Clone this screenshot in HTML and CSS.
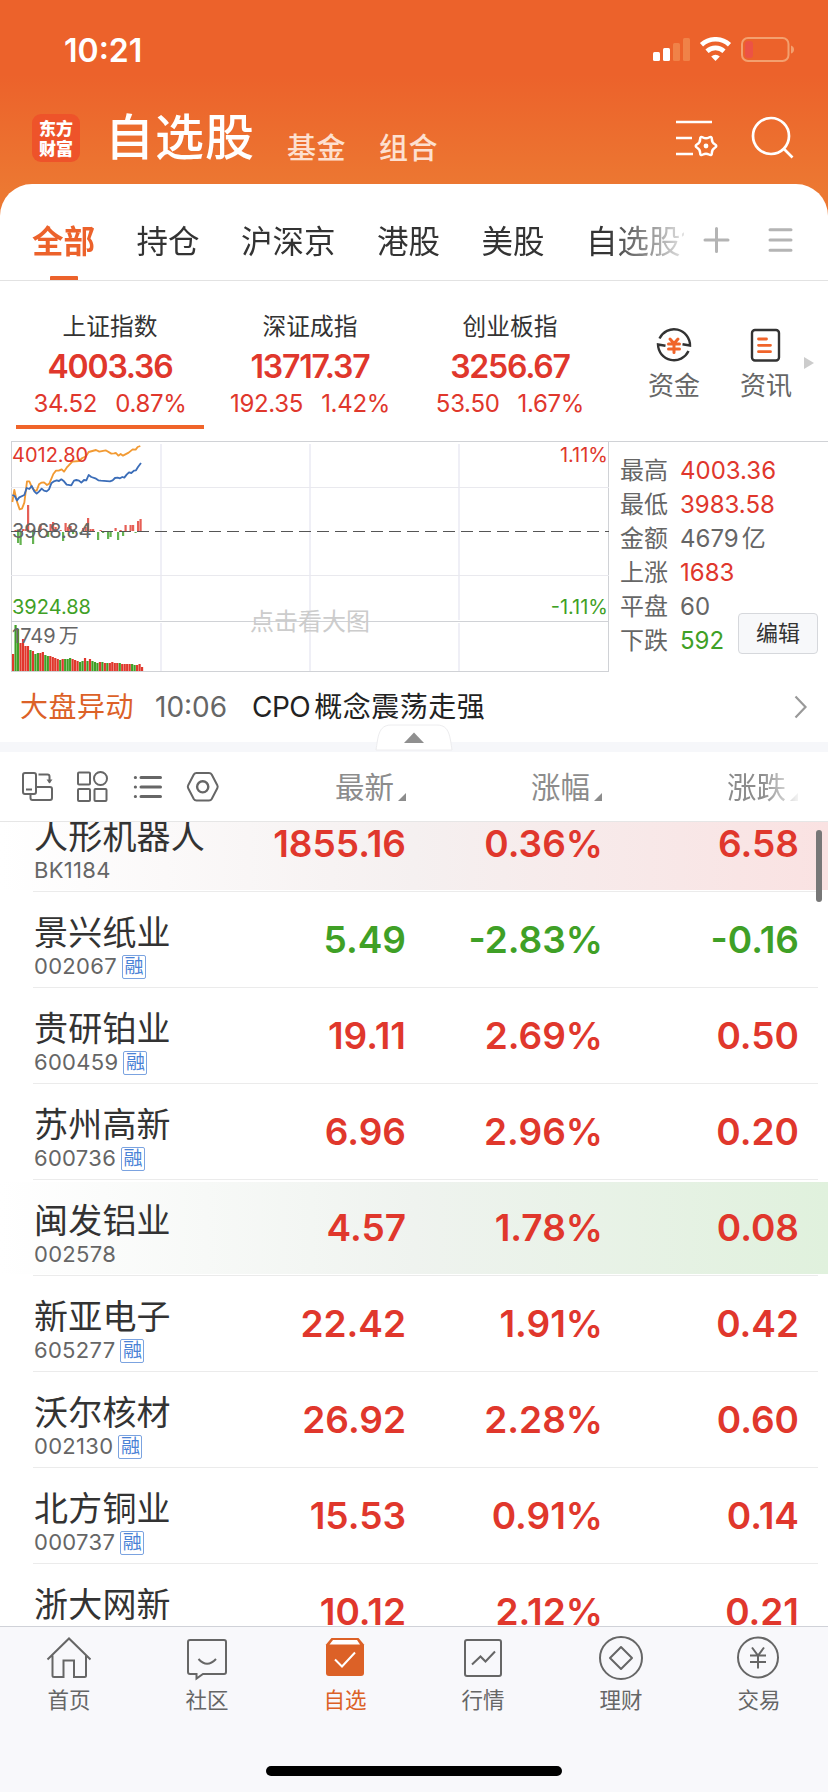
FILE: index.html
```html
<!DOCTYPE html>
<html lang="zh-CN">
<head>
    <meta charset="UTF-8">
    <meta name="viewport" content="width=device-width, initial-scale=1.0">
    <title>自选股</title>
    <link rel="stylesheet" href="styles.css">
</head>
<body>
    <header class="header">
        <div class="status">
            <span class="clock">10:21</span>
            <svg width="142" height="26" viewBox="0 0 142 26">
                <rect x="0" y="15" width="7" height="9" rx="1.5" fill="#fff"/>
                <rect x="10" y="11" width="7" height="13" rx="1.5" fill="#fff"/>
                <rect x="20" y="6" width="7" height="18" rx="1.5" fill="#f08248"/>
                <rect x="30" y="1" width="7" height="23" rx="1.5" fill="#f08248"/>
                <g fill="none" stroke="#fff" stroke-width="4.6">
                    <path d="M48.5 7.8a20.5 20.5 0 0 1 28 0"/>
                    <path d="M54 14.2a12.5 12.5 0 0 1 17 0"/>
                </g>
                <path d="M62.5 24l-4.3-4.5a6.5 6.5 0 0 1 8.6 0z" fill="#fff"/>
                <rect x="89" y="1" width="46.5" height="23" rx="6" fill="none" stroke="#f3a06f" stroke-width="2"/>
                <rect x="92" y="4" width="8" height="17" rx="3" fill="#ec5245"/>
                <path d="M138 8.5q3 1 3 4t-3 4z" fill="#f3a06f"/>
            </svg>
        </div>
        <div class="title-bar">
            <div class="logo"><span>东方</span><span>财富</span></div>
            <h1>自选股</h1>
            <span class="sub">基金</span>
            <span class="sub">组合</span>
            <svg class="head-icons" width="120" height="44" viewBox="0 0 120 44" fill="none" stroke="#fff" stroke-width="2.7">
                <path d="M0 6h36M0 22h16M0 38h17"/>
                <path transform="translate(30 30) scale(.92)" d="M9.6 1.85Q6.4 3.7 6.4 7.4Q6.4 11.1 3.2 9.25Q0 7.4-3.2 9.25Q-6.4 11.1-6.4 7.4Q-6.4 3.7-9.6 1.85Q-12.8 0-9.6-1.85Q-6.4-3.7-6.4-7.4Q-6.4-11.1-3.2-9.25Q0-7.4 3.2-9.25Q6.4-11.1 6.4-7.4Q6.4-3.7 9.6-1.85Q12.8 0 9.6 1.85z"/>
                <circle cx="30" cy="30" r="2.4" fill="#fff" stroke="none"/>
                <circle cx="95" cy="20" r="18"/>
                <path d="M107.5 32.5l9 9"/>
            </svg>
        </div>
    </header>

    <main class="panel">
        <nav class="tabs">
            <div class="tab-scroll">
                <span class="tab active">全部</span>
                <span class="tab">持仓</span>
                <span class="tab">沪深京</span>
                <span class="tab">港股</span>
                <span class="tab">美股</span>
                <span class="tab">自选股1</span>
            </div>
            <svg width="90" height="28" viewBox="0 0 90 28" stroke="#b4b4b4" stroke-width="3" stroke-linecap="round">
                <path d="M2 14h23M13.5 2.500v23M67 3.700h21M67 14h21M67 24.300h21"/>
            </svg>
        </nav>

        <section class="indices">
            <div class="index active">
                <span class="name">上证指数</span>
                <strong>4003.36</strong>
                <span class="change"><i>34.52</i><i>0.87%</i></span>
            </div>
            <div class="index">
                <span class="name">深证成指</span>
                <strong>13717.37</strong>
                <span class="change"><i>192.35</i><i>1.42%</i></span>
            </div>
            <div class="index">
                <span class="name">创业板指</span>
                <strong>3256.67</strong>
                <span class="change"><i>53.50</i><i>1.67%</i></span>
            </div>
            <div class="shortcut first">
                <svg width="38" height="38" viewBox="0 0 38 38" fill="none" stroke="#333" stroke-width="2.4">
                    <path d="M4.500 12.500a16 16 0 0 1 30.500 7l-7.500-1.300"/>
                    <path d="M33.500 25a16 16 0 0 1-30.500-6.500l7.500 1.300"/>
                    <path stroke="#f0642a" stroke-width="3" stroke-linecap="round" d="M15 13l4 4.500 4-4.500M13.500 18h11M13.500 23h11M19 18v8.500"/>
                </svg>
                <span>资金</span>
            </div>
            <div class="shortcut">
                <svg width="38" height="38" viewBox="0 0 38 38" fill="none" stroke="#333" stroke-width="2.4">
                    <rect x="5" y="4" width="27" height="30.5" rx="3"/>
                    <path stroke="#f0642a" stroke-width="2.8" stroke-linecap="round" d="M11.500 13h8M11.500 19.300h12M11.500 25.700h12"/>
                </svg>
                <span>资讯</span>
            </div>
            <svg class="more" width="10" height="12" viewBox="0 0 10 12"><path d="M0 0l10 6-10 6z" fill="#ccc"/></svg>
        </section>

        <section class="market">
            <div class="chart">
                <svg width="598" height="231" viewBox="0 0 598 231">
                    <g fill="none">
                        <path stroke="#efeff6" stroke-width="2" d="M150 3v176M299 3v176M448 3v176M150 182v48M299 182v48M448 182v48"/>
                        <path stroke="#e9e9ee" d="M0 46.500h598M0 134.500h598"/>
                        <path stroke="#d0d2d6" d="M0 180.500h598"/>
                    </g>
                    <g id="bars"></g>
                    <path stroke="#555" stroke-dasharray="12 6" d="M0 90.500h598"/>
                    <g transform="translate(-11 -11) scale(.3333)" fill="none" stroke-width="5.5" stroke-linejoin="round">
                        <polyline stroke="#f29a33" points="37,216 43,180 51,215 59,238 66,236 73,218 81,154 88,154 96,172 104,182 110,182 117,163 124,158 132,157 141,165 148,161 160,132 168,122 176,122 185,118 192,125 200,113 217,95 237,93 247,84 257,80 266,66 288,60 298,65 317,61 334,71 342,70 348,69 355,77 362,72 369,77 386,68 398,58 407,59 413,51 421,48"/>
                        <polyline stroke="#3b6db8" points="37,195 44,198 51,211 58,202 73,195 80,174 88,177 95,168 103,184 110,191 117,185 125,176 132,182 140,184 147,178 154,160 162,154 170,151 177,153 184,148 192,154 200,164 214,166 222,152 229,150 237,152 244,158 252,150 259,151 266,135 274,141 286,145 295,151 303,152 330,154 338,151 345,144 353,143 360,145 367,141 373,143 380,134 387,127 394,129 402,122 408,121 414,111 423,99"/>
                    </g>
                </svg>
                <span class="label red high">4012.80</span>
                <span class="label mid">3968.84</span>
                <span class="label green low">3924.88</span>
                <span class="label red high right">1.11%</span>
                <span class="label green low right">-1.11%</span>
                <span class="label volume">1749<b>万</b></span>
                <span class="hint">点击看大图</span>
            </div>
            <dl class="stats">
                <dt>最高</dt><dd class="red">4003.36</dd>
                <dt>最低</dt><dd class="red">3983.58</dd>
                <dt>金额</dt><dd>4679<b>亿</b></dd>
                <dt>上涨</dt><dd class="red">1683</dd>
                <dt>平盘</dt><dd>60</dd>
                <dt>下跌</dt><dd class="green">592</dd>
            </dl>
            <button class="edit">编辑</button>
        </section>

        <section class="news">
            <span class="tag">大盘异动</span>
            <time>10:06</time>
            <span class="headline"><b>CPO</b>概念震荡走强</span>
            <svg width="14" height="24" viewBox="0 0 14 24" fill="none" stroke="#999" stroke-width="2.2"><path d="M1.500 1.500l10 10.500-10 10.500"/></svg>
        </section>
        <div class="band">
            <svg class="pull" width="80" height="28" viewBox="0 0 80 28">
                <path d="M2 26c2-12 2-25 15-25h46c13 0 13 13 15 25z" fill="#fff" stroke="#ececee"/>
                <path d="M30 19l10-10.500 10 10.500z" fill="#8f8f8f"/>
            </svg>
        </div>

        <section class="list-head">
            <svg width="200" height="34" viewBox="0 0 200 34" fill="none" stroke="#666" stroke-width="2">
                <path stroke-linejoin="round" d="M5 3h9q2 0 2 2v17q0 2-2 2h-9q-2 0-2-2v-17q0-2 2-2zM6 19.500h6M10.500 24v4q0 2 2 2h17.500q2 0 2-2v-9q0-2-2-2h-14M18.500 4.500h9q2 0 2 2v6"/>
                <path d="M26.500 9.500h6l-3 4z" fill="#666" stroke="none"/>
                <rect x="58" y="2.500" width="12" height="12" rx="1"/>
                <circle cx="80.500" cy="8.500" r="6.500"/>
                <rect x="58" y="19" width="12" height="12" rx="1"/>
                <rect x="74.500" y="19" width="12" height="12" rx="1"/>
                <path stroke-width="3" stroke-linecap="round" d="M121 7.500h19.500M121 17h19.500M121 26.500h19.500M115.300 7.500h.2M115.300 17h.2M115.300 26.500h.2"/>
                <path stroke-linejoin="round" d="M176.500 3h12.500q1.800 0 2.700 1.500l5.600 10.700q.8 1.500 0 3l-5.600 10.800q-.9 1.500-2.700 1.500h-12.500q-1.800 0-2.700-1.500l-5.600-10.800q-.8-1.500 0-3l5.600-10.700q.9-1.500 2.700-1.500z"/>
                <circle cx="182.700" cy="16.800" r="5.600" stroke-width="2.400"/>
            </svg>
            <span class="col">最新</span>
            <span class="col">涨幅</span>
            <span class="col fade">涨跌</span>
        </section>

        <section class="list">
            <div class="row flash-red">
                <div class="stock"><span class="name">人形机器人</span><span class="code">BK1184</span></div>
                <span class="num red">1855.16</span><span class="num red">0.36%</span><span class="num red">6.58</span>
            </div>
            <div class="row">
                <div class="stock"><span class="name">景兴纸业</span><span class="code">002067<em>融</em></span></div>
                <span class="num green">5.49</span><span class="num green">-2.83%</span><span class="num green">-0.16</span>
            </div>
            <div class="row">
                <div class="stock"><span class="name">贵研铂业</span><span class="code">600459<em>融</em></span></div>
                <span class="num red">19.11</span><span class="num red">2.69%</span><span class="num red">0.50</span>
            </div>
            <div class="row">
                <div class="stock"><span class="name">苏州高新</span><span class="code">600736<em>融</em></span></div>
                <span class="num red">6.96</span><span class="num red">2.96%</span><span class="num red">0.20</span>
            </div>
            <div class="row flash-green">
                <div class="stock"><span class="name">闽发铝业</span><span class="code">002578</span></div>
                <span class="num red">4.57</span><span class="num red">1.78%</span><span class="num red">0.08</span>
            </div>
            <div class="row">
                <div class="stock"><span class="name">新亚电子</span><span class="code">605277<em>融</em></span></div>
                <span class="num red">22.42</span><span class="num red">1.91%</span><span class="num red">0.42</span>
            </div>
            <div class="row">
                <div class="stock"><span class="name">沃尔核材</span><span class="code">002130<em>融</em></span></div>
                <span class="num red">26.92</span><span class="num red">2.28%</span><span class="num red">0.60</span>
            </div>
            <div class="row">
                <div class="stock"><span class="name">北方铜业</span><span class="code">000737<em>融</em></span></div>
                <span class="num red">15.53</span><span class="num red">0.91%</span><span class="num red">0.14</span>
            </div>
            <div class="row">
                <div class="stock"><span class="name">浙大网新</span></div>
                <span class="num red">10.12</span><span class="num red">2.12%</span><span class="num red">0.21</span>
            </div>
            <div class="scrollbar"></div>
        </section>
    </main>

    <footer class="bottom">
        <nav>
            <a>
                <svg width="48" height="46" viewBox="0 0 48 46"><path d="M2.500 23.500l21.500-21 21.500 21M7.500 19.500v20q0 1.500 1.500 1.500h9.500v-16.500h10.500v16.500h10.500q1.500 0 1.500-1.500v-20"/></svg>
                <span>首页</span>
            </a>
            <a>
                <svg width="48" height="46" viewBox="0 0 48 46"><path d="M7 4h34q2 0 2 2v30q0 2-2 2h-21l-6.500 4.500v-4.500h-6.500q-2 0-2-2v-30q0-2 2-2zM15.500 23q8.500 9.500 17.500 0"/></svg>
                <span>社区</span>
            </a>
            <a class="active">
                <svg width="48" height="46" viewBox="0 0 48 46">
                    <path d="M10.500 2h27l5.500 6.500v28.500q0 3-3 3h-32q-3 0-3-3v-28.500z" fill="#dc6127" stroke="none"/>
                    <path d="M12 4h24l3 4.500h-30.500z" fill="#fff" stroke="none"/>
                    <path d="M14 23.500l7 7 13-14" stroke="#fff"/>
                </svg>
                <span>自选</span>
            </a>
            <a>
                <svg width="48" height="46" viewBox="0 0 48 46"><rect x="6" y="4" width="36" height="36" rx="2"/><path d="M13 28.500l8.500-8 5 5 9.500-10"/></svg>
                <span>行情</span>
            </a>
            <a>
                <svg width="48" height="46" viewBox="0 0 48 46"><circle cx="24" cy="22" r="21"/><path stroke-linejoin="round" d="M24 11l11 11-11 11-11-11z"/></svg>
                <span>理财</span>
            </a>
            <a>
                <svg width="48" height="46" viewBox="0 0 48 46"><circle cx="23" cy="21.500" r="20"/><path d="M17 11.500l6 8 6-8M15 19.500h16M15 26h16M23 19.500v13"/></svg>
                <span>交易</span>
            </a>
        </nav>
        <div class="home-bar"></div>
    </footer>

    <script>
        const red = '#e0372c';
        const green = '#3fa026';
        const step = 2.48;

        // sign gives the colour, size gives the height
        const volume = [17, -46, -42, 28, 32, 25, 25, -21, 20, -17, -18, 18, 19, -16, -15, 15, 14, 13, 12, -11,
            12, -12, -12, -13, 12, 11, 10, -9, -10, 13, -10, 12, -10, -9, -8, 9, -9, 8, -8, 8, 9, 8, 8, -8,
            7, 7, 7, 7, -7, -6, 6, 7, 4];
        const flow = [0, 1, -11, -13, 2, 2, 26, 0, -12, 0, 0, 7, 0, 0, -5, 7, 9, 4, 0, 1, -9, 8, 4, 5, -2, 0, 0,
            -2, 3, 4, 13, 2, 2, 0, -8, 1, -1, 0, -7, -5, 0, 3, -8, 1, -4, 6, 0, 6, 6, -1, 10, 12];

        function bar(x, y, height, color, opacity) {
            return `<rect x="${x}" y="${y}" width="2.2" height="${height}" fill="${color}" opacity="${opacity}"/>`;
        }

        let bars = '';
        volume.forEach((v, i) => {
            bars += bar(1 + i * step, 230 - Math.abs(v), Math.abs(v), v > 0 ? red : green, 1);
        });
        flow.forEach((v, i) => {
            bars += bar(1 + i * step * 1.008, v > 0 ? 90 - v : 91, Math.abs(v), v > 0 ? red : green, 0.8);
        });
        document.getElementById('bars').innerHTML = bars;
    </script>
</body>
</html>
```
FILE: styles.css
```css
* {
    box-sizing: border-box;
}
body {
    margin: 0;
    width: 828px;
    height: 1792px;
    overflow: hidden;
    display: flex;
    flex-direction: column;
    font-family: Inter, "Noto Sans CJK SC", sans-serif;
    color: #333;
    background: linear-gradient(#ec622b 75px, #ec7832 190px);
}
h1, dl, dd {
    margin: 0;
}
svg {
    display: block;
    flex: none;
}
i, em {
    font-style: normal;
}
b {
    font-weight: 400;
}
.red {
    color: #e0372c;
}
.green {
    color: #3fa026;
}

/* header */
.header {
    height: 184px;
    flex: none;
    color: #fff;
}
.status {
    height: 100px;
    padding: 0 33px 0 64px;
    display: flex;
    align-items: center;
    justify-content: space-between;
}
.clock {
    font-size: 32px;
    font-weight: 600;
}
.title-bar {
    height: 76px;
    padding: 0 32px;
    display: flex;
    align-items: center;
}
.logo {
    width: 48px;
    height: 48px;
    border-radius: 9px;
    background: #ee532a;
    display: flex;
    flex-direction: column;
    align-items: center;
    justify-content: center;
    font: 900 17px/20px "Noto Sans CJK SC", sans-serif;
}
.title-bar h1 {
    margin: 0 32px 0 25px;
    font-size: 49px;
    font-weight: 500;
    line-height: 70px;
    letter-spacing: 1px;
}
.sub {
    margin: 21px 33px 0 0;
    font-size: 29px;
    font-weight: 500;
    letter-spacing: 0.5px;
    line-height: 40px;
    color: #fde0d0;
}
.head-icons {
    margin-left: auto;
}

/* white panel */
.panel {
    flex: 1;
    min-height: 0;
    display: flex;
    flex-direction: column;
    background: #fff;
    border-radius: 32px 32px 0 0;
}
.tabs {
    height: 97px;
    flex: none;
    padding: 0 35px 0 32px;
    display: flex;
    border-bottom: 1px solid #e2e2e2;
}
.tabs svg {
    margin: 42px 0 0 auto;
}
.tab-scroll {
    width: 652px;
    display: flex;
    gap: 41.5px;
    overflow: hidden;
    -webkit-mask-image: linear-gradient(to right, #000 575px, transparent 664px);
    mask-image: linear-gradient(to right, #000 575px, transparent 664px);
}
.tab {
    display: flex;
    flex-direction: column;
    flex: none;
    padding-top: 34px;
    font-size: 31.5px;
    line-height: 48px;
}
.tab.active {
    color: #ec622b;
    font-weight: 600;
}
.tab.active::after {
    content: "";
    width: 28px;
    height: 4px;
    margin: auto auto 0;
    border-radius: 1px 1px 0 0;
    background: #ec622b;
}

/* index cards */
.indices {
    height: 160px;
    flex: none;
    padding: 0 15px 0 16px;
    display: flex;
}
.index {
    width: 188px;
    height: 148px;
    flex: none;
    margin-right: 12px;
    padding-top: 27px;
    display: flex;
    flex-direction: column;
    align-items: center;
}
.index.active {
    border-bottom: 4px solid #f0642a;
}
.index .name {
    font-size: 23.7px;
    line-height: 37px;
}
.index strong {
    font-size: 32px;
    line-height: 43px;
    font-weight: 600;
    letter-spacing: -1.2px;
    color: #e0372c;
}
.change {
    display: flex;
    gap: 18px;
    font-size: 24px;
    line-height: 31px;
    letter-spacing: -0.3px;
    color: #e0372c;
}
.shortcut {
    width: 92px;
    flex: none;
    padding-top: 45px;
    display: flex;
    flex-direction: column;
    align-items: center;
    font-size: 26px;
    line-height: 44px;
    color: #666;
}
.shortcut.first {
    margin-left: 12px;
}
.more {
    margin: 76px 0 0 -8px;
}

/* chart and daily figures */
.market {
    position: relative;
    height: 231px;
    flex: none;
    margin-left: 11px;
    display: flex;
    border-top: 1px solid #d0d2d6;
}
.chart {
    position: relative;
    width: 598px;
    border: 1px solid #d0d2d6;
    border-top: 0;
}
.chart svg {
    margin: -1px;
}
.label {
    position: absolute;
    left: 0;
    font-size: 20px;
    line-height: 24px;
    color: #666;
}
.label.red {
    color: #e0372c;
}
.label.green {
    color: #3fa026;
}
.label.right {
    left: auto;
    right: 0;
}
.high {
    top: 1px;
}
.mid {
    top: 77px;
}
.low {
    top: 153px;
}
.volume {
    top: 182px;
}
.volume b {
    margin-left: 3px;
}
.hint {
    position: absolute;
    top: 162px;
    left: 0;
    right: 0;
    text-align: center;
    font-size: 24px;
    line-height: 36px;
    color: #ccc;
}
.stats {
    padding: 12px 0 0 11px;
    display: grid;
    grid-template-columns: 60px auto;
    grid-auto-rows: 34px;
    align-content: start;
    font-size: 24px;
    line-height: 34px;
    color: #666;
}
.stats b {
    margin-left: 3px;
}
.edit {
    position: absolute;
    right: 10px;
    top: 171px;
    width: 80px;
    height: 41px;
    padding: 0 0 5px;
    border: 1px solid #d6d8dc;
    border-radius: 4px;
    background: #f7f8fa;
    font: 22px/34px "Noto Sans CJK SC", sans-serif;
    color: #333;
}

/* news line */
.news {
    height: 70px;
    flex: none;
    padding: 0 20px;
    display: flex;
    align-items: center;
    font-size: 28px;
    line-height: 40px;
}
.tag {
    width: 135px;
    color: #dc6127;
    letter-spacing: 0.5px;
}
.news time {
    width: 97px;
    color: #666;
}
.headline {
    letter-spacing: 0.5px;
    color: #222;
}
.headline b {
    margin-right: 4px;
    letter-spacing: -0.5px;
}
.news svg {
    margin-left: auto;
}
.band {
    position: relative;
    height: 10px;
    flex: none;
    background: #f6f7fa;
}
.pull {
    position: absolute;
    left: 374px;
    bottom: 0;
}

/* watch list */
.list-head {
    height: 70px;
    flex: none;
    padding-left: 20px;
    display: flex;
    align-items: center;
    border-bottom: 1px solid #e6e6e6;
}
.col {
    display: flex;
    align-items: flex-end;
    justify-content: flex-end;
    width: 196px;
    font-size: 29.5px;
    line-height: 46px;
    color: #8c8c8c;
}
.col:first-of-type {
    width: 186px;
}
.col::after {
    content: "";
    margin: 0 0 9px 4px;
    border-left: 8px solid transparent;
    border-bottom: 8px solid #8c8c8c;
}
.fade {
    -webkit-mask-image: linear-gradient(to right, #000 160px, transparent 200px);
    mask-image: linear-gradient(to right, #000 160px, transparent 200px);
}
.list {
    position: relative;
    flex: 1;
    min-height: 0;
    overflow: hidden;
    display: flex;
    flex-direction: column;
}
.row {
    height: 96px;
    flex: none;
    padding: 0 0 2px 34px;
    display: flex;
    align-items: center;
    background: linear-gradient(#ebebeb, #ebebeb) 33px 95px / 785px 1px no-repeat;
}
.row:first-child {
    margin-top: -26px;
}
.flash-red {
    background: linear-gradient(#ebebeb, #ebebeb) 33px 95px / 785px 1px no-repeat,
        linear-gradient(to right, #fff, #f5f0f0 50%, #fae2e2) 0 2px / 100% 92px no-repeat;
}
.flash-green {
    background: linear-gradient(#ebebeb, #ebebeb) 33px 95px / 785px 1px no-repeat,
        linear-gradient(to right, #fff, #eff3ef 50%, #e0f1dd) 0 2px / 100% 92px no-repeat;
}
.stock {
    width: 179px;
    height: 94px;
    padding-top: 19px;
    display: flex;
    flex-direction: column;
    white-space: nowrap;
}
.stock .name {
    font-size: 34px;
    line-height: 43px;
    letter-spacing: 0.2px;
}
.code {
    display: flex;
    align-items: center;
    height: 25px;
    font-size: 22px;
    line-height: 25px;
    letter-spacing: 0.3px;
    color: #666;
}
.code em {
    width: 24px;
    height: 24px;
    margin-left: 5px;
    border: 1px solid #7ba3e0;
    border-radius: 2px;
    font-size: 19px;
    line-height: 21px;
    letter-spacing: 0;
    text-align: center;
    color: #4a82d6;
}
.num {
    width: 193px;
    text-align: right;
    font-size: 37px;
    font-weight: 600;
}
.num:nth-child(3) {
    width: 197px;
}
.num:nth-child(4) {
    width: 196px;
}
.scrollbar {
    position: absolute;
    right: 6px;
    top: 8px;
    width: 6px;
    height: 72px;
    border-radius: 3px;
    background: #777;
}

/* bottom navigation */
.bottom {
    height: 166px;
    flex: none;
    border-top: 1px solid #d0d2d8;
    background: #f8f8fb;
}
.bottom nav {
    height: 139px;
    display: flex;
}
.bottom a {
    width: 138px;
    padding-top: 9px;
    display: flex;
    flex-direction: column;
    align-items: center;
    font-size: 21.5px;
    line-height: 32px;
    color: #666;
}
.bottom a svg {
    fill: none;
    stroke: #666;
    stroke-width: 2;
}
.bottom a span {
    margin-top: 2px;
}
.bottom a.active {
    color: #dc6127;
}
.home-bar {
    width: 296px;
    height: 10px;
    margin: 0 auto;
    border-radius: 5px;
    background: #000;
}
```
